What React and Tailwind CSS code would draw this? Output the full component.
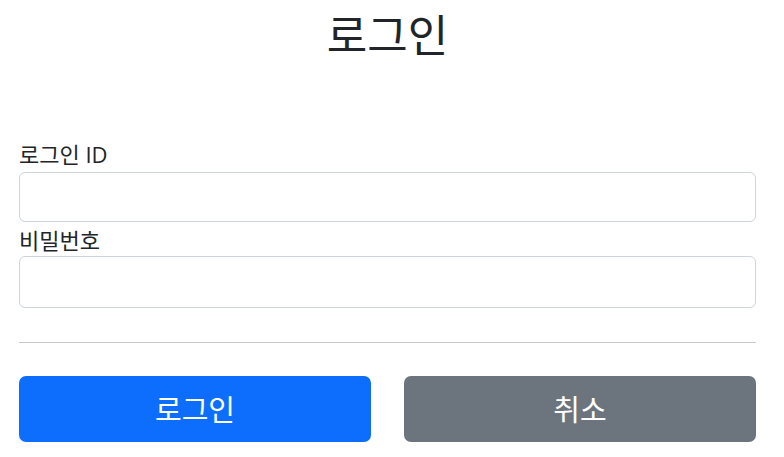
export default function App() {
  return (
    <div
      className="w-full h-[457px] bg-white pl-[19px] pr-[28px] text-[#212529] overflow-hidden"
      style={{ fontFamily: '"Open Sans", "Noto Sans CJK KR", sans-serif' }}
    >
      <h2 className="pt-[11px] text-center text-[44px] leading-[48px] font-normal">로그인</h2>

      <form className="mt-[81px]" onSubmit={(e) => e.preventDefault()}>
        <label htmlFor="loginId" className="block h-[30px] text-[22px] leading-[28px]">
          로그인 ID
        </label>
        <input
          id="loginId"
          type="text"
          className="mt-[2px] block w-full h-[50px] rounded-[6px] border border-[#ced4da] bg-white px-4 text-[20px] outline-none"
        />

        <label htmlFor="password" className="mt-[4px] block h-[30px] text-[22px] leading-[28px]">
          비밀번호
        </label>
        <input
          id="password"
          type="password"
          className="block w-full h-[52px] rounded-[6px] border border-[#ced4da] bg-white px-4 text-[20px] outline-none"
        />

        <hr className="mt-[34px] border-0 border-t border-[#c8c9ca]" />

        <div className="mt-[33px] grid grid-cols-2 gap-[33px]">
          <button
            type="submit"
            className="h-[66px] w-full rounded-[7px] bg-[#0d6efd] text-[29px] leading-none text-white"
          >
            로그인
          </button>
          <button
            type="button"
            className="h-[66px] w-full rounded-[7px] bg-[#6c757d] text-[29px] leading-none text-white"
          >
            취소
          </button>
        </div>
      </form>
    </div>
  )
}
